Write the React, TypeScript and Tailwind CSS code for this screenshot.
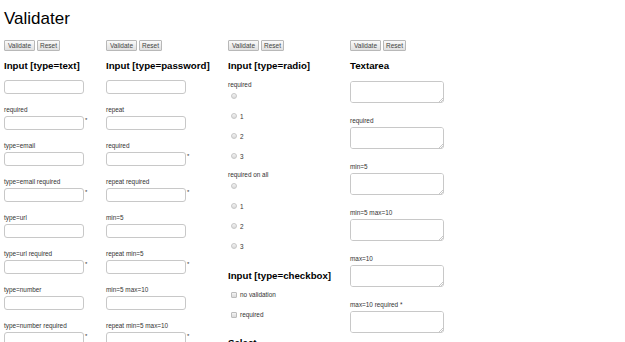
import React from 'react';

type Field = { label?: string; required?: boolean };

const textFields: Field[] = [
  {},
  { label: 'required', required: true },
  { label: 'type=email' },
  { label: 'type=email required', required: true },
  { label: 'type=url' },
  { label: 'type=url required', required: true },
  { label: 'type=number' },
  { label: 'type=number required', required: true },
];

const passwordFields: Field[] = [
  {},
  { label: 'repeat' },
  { label: 'required', required: true },
  { label: 'repeat required', required: true },
  { label: 'min=5' },
  { label: 'repeat min=5', required: true },
  { label: 'min=5 max=10' },
  { label: 'repeat min=5 max=10', required: true },
];

const textareaLabels = ['', 'required', 'min=5', 'min=5 max=10', 'max=10', 'max=10 required *'];

function Buttons() {
  return (
    <div className="flex gap-[2px] h-[11px]">
      <button className="w-[31px] h-[11px] border border-[#b8b8b8] rounded-[1px] bg-linear-to-b from-[#fafafa] to-[#e0e0e0] text-[6.5px] leading-[9px] text-[#444]">
        Validate
      </button>
      <button className="w-[23px] h-[11px] border border-[#b8b8b8] rounded-[1px] bg-linear-to-b from-[#fafafa] to-[#e0e0e0] text-[6.5px] leading-[9px] text-[#444]">
        Reset
      </button>
    </div>
  );
}

function Heading({ children, className = 'mt-[8px]' }: { children: React.ReactNode; className?: string }) {
  return (
    <h2 className={`${className} h-[14px] text-[9.7px] leading-[14px] font-bold text-black whitespace-nowrap`}>
      {children}
    </h2>
  );
}

function Label({ children }: { children: React.ReactNode }) {
  return <div className="h-[8px] text-[6.4px] leading-[8px] text-[#333] whitespace-nowrap">{children}</div>;
}

function TextField({ field, first }: { field: Field; first: boolean }) {
  return (
    <div className={first ? 'mt-[7px]' : 'mt-[12px]'}>
      {field.label && (
        <div className="mb-[2px]">
          <Label>{field.label}</Label>
        </div>
      )}
      <div className="flex items-start">
        <input className="block w-[80px] h-[14px] border border-[#c8c8c8] rounded-[3px] bg-white" />
        {field.required && <span className="ml-[1px] text-[6px] leading-[8px] text-[#333]">*</span>}
      </div>
    </div>
  );
}

function Radio({ n, first }: { n?: string; first?: boolean }) {
  return (
    <div className={`${first ? 'mt-[4px]' : 'mt-[14px]'} flex items-center h-[6px] ml-[3px]`}>
      <span className="block w-[6px] h-[6px] rounded-full border border-[#c6c6c6] bg-linear-to-b from-[#f4f4f4] to-[#dadada]" />
      {n && <span className="ml-[3px] text-[6.4px] leading-[6px] text-[#333] pt-[1px]">{n}</span>}
    </div>
  );
}

function Checkbox({ label, className }: { label: string; className: string }) {
  return (
    <div className={`${className} flex items-center h-[6px] ml-[3px]`}>
      <span className="block w-[6px] h-[6px] rounded-[1px] border border-[#bcbcbc] bg-linear-to-b from-[#f4f4f4] to-[#dadada]" />
      <span className="ml-[3px] text-[6.4px] leading-[6px] text-[#333] whitespace-nowrap">{label}</span>
    </div>
  );
}

function TextArea() {
  return (
    <div className="relative w-[94px] h-[22px]">
      <textarea className="block w-[94px] h-[22px] border border-[#c8c8c8] rounded-[3px] bg-white resize-none" />
      <svg className="absolute right-[1px] bottom-[1px]" width="5" height="5" viewBox="0 0 5 5">
        <path d="M1 5 L5 1 M3 5 L5 3" stroke="#b0b0b0" strokeWidth="0.7" fill="none" />
      </svg>
    </div>
  );
}

export default function App() {
  return (
    <div className="min-h-screen bg-white font-['Liberation_Sans',Arial,sans-serif] text-black pl-[4px] overflow-hidden">
      <h1 className="pt-[9px] h-[29px] text-[17px] leading-[20px] font-normal">Validater</h1>

      <div className="mt-[11px] flex items-start">
        <div className="w-[102px] shrink-0">
          <Buttons />
          <Heading>Input [type=text]</Heading>
          {textFields.map((f, i) => (
            <TextField key={i} field={f} first={i === 0} />
          ))}
        </div>

        <div className="w-[122px] shrink-0">
          <Buttons />
          <Heading>Input [type=password]</Heading>
          {passwordFields.map((f, i) => (
            <TextField key={i} field={f} first={i === 0} />
          ))}
        </div>

        <div className="w-[122px] shrink-0">
          <Buttons />
          <Heading>Input [type=radio]</Heading>
          <div className="mt-[8px]">
            <Label>required</Label>
          </div>
          <Radio first />
          <Radio n="1" />
          <Radio n="2" />
          <Radio n="3" />
          <div className="mt-[12px]">
            <Label>required on all</Label>
          </div>
          <Radio first />
          <Radio n="1" />
          <Radio n="2" />
          <Radio n="3" />
          <Heading className="mt-[20px]">Input [type=checkbox]</Heading>
          <Checkbox label="no validation" className="mt-[9px]" />
          <Checkbox label="required" className="mt-[14px]" />
          <Heading className="mt-[18px]">Select</Heading>
          <select className="mt-[8px] block w-[80px] h-[14px] border border-[#c8c8c8] rounded-[3px] text-[6px]">
            <option></option>
          </select>
        </div>

        <div className="w-[110px] shrink-0">
          <Buttons />
          <Heading>Textarea</Heading>
          {textareaLabels.map((l, i) => (
            <div key={i} className={i === 0 ? 'mt-[8px]' : 'mt-[14px]'}>
              {l && (
                <div className="mb-[2px]">
                  <Label>{l}</Label>
                </div>
              )}
              <TextArea />
            </div>
          ))}
        </div>
      </div>
    </div>
  );
}
